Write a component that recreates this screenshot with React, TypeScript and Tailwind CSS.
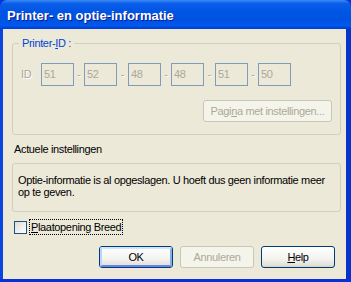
const font = "font-['Tahoma','Liberation_Sans',Arial,sans-serif]"

const ids = ["51", "52", "48", "48", "51", "50"]

function IdBox({ value }: { value: string }) {
    return (
        <div className="flex h-[23px] w-[33px] items-center border border-[#7f9db9] bg-[#ece9d8] pl-[2px] text-[#aca899]">
            {value}
        </div>
    )
}

function XpButton({ children, variant }: { children: React.ReactNode; variant: "default" | "normal" | "disabled" }) {
    if (variant === "disabled") {
        return (
            <div className="flex h-[22px] w-[74px] items-center justify-center rounded-[3px] border border-[#c9c7ba] bg-[#f5f4ea] text-[#aca899]">
                {children}
            </div>
        )
    }
    return (
        <div className="h-[22px] w-[74px] rounded-[3px] border border-[#003c74] bg-[linear-gradient(to_bottom,#ffffff,#f3f3ef_60%,#e3e1d8_90%,#d6d0c5)]">
            <div
                className={
                    variant === "default"
                        ? "flex h-full w-full items-center justify-center rounded-[2px] border-[2px] border-t-[#cee7ff] border-l-[#bcd4f6] border-r-[#89ade4] border-b-[#6982ee] text-black"
                        : "flex h-full w-full items-center justify-center text-black"
                }
            >
                {children}
            </div>
        </div>
    )
}

export default function App() {
    return (
        <div className={`h-[282px] w-[351px] overflow-hidden bg-[#0831d9] text-[11px] leading-[13px] ${font}`}>
            <div className="flex h-[29px] items-center rounded-t-[7px] bg-[linear-gradient(to_bottom,#3d8bf7_0%,#0a5ee8_12%,#0055e5_40%,#0053e1_70%,#0058ee_88%,#003cd0_100%)] pl-[7px] pt-[1px]">
                <span className="font-['Liberation_Sans',Arial,sans-serif] text-[13px] font-bold text-white [text-shadow:1px_1px_#0a1b8c]">
                    Printer- en optie-informatie
                </span>
            </div>
            <div className="flex h-[250px] flex-col border-l-[3px] border-r-[5px] border-l-[#0a45e0] border-r-[#0733c9] bg-[#ece9d8] tracking-[-0.35px]">
                {/* Printer-ID group */}
                <div className="relative ml-[9px] mt-[14px] h-[92px] w-[329px] rounded-[3px] border border-[#d0d0bf]">
                    <span className="absolute left-[6px] top-[-7px] bg-[#ece9d8] px-[3px] text-[#0046d5]">
                        Printer-<span className="underline">I</span>D :
                    </span>
                    <div className="ml-[8px] mt-[19px] flex items-center">
                        <span className="w-[20px] text-[#aca899] [text-shadow:1px_1px_#ffffff]">ID</span>
                        {ids.map((v, i) => (
                            <div key={i} className="flex items-center">
                                <IdBox value={v} />
                                {i < ids.length - 1 && (
                                    <span className={`${i % 2 === 0 ? "w-[10px]" : "w-[11px]"} text-center text-[#aca899] [text-shadow:1px_1px_#ffffff]`}>-</span>
                                )}
                            </div>
                        ))}
                    </div>
                    <div className="mt-[14px] flex justify-end pr-[8px]">
                        <div className="flex h-[22px] w-[129px] items-center justify-center rounded-[3px] border border-[#c9c7ba] bg-[#f5f4ea] text-[#aca899]">
                            Pagi<span className="underline">n</span>a met instellingen...
                        </div>
                    </div>
                </div>

                <div className="ml-[11px] mt-[8px] text-black">Actuele instellingen</div>

                <div className="ml-[9px] mt-[7px] h-[49px] w-[329px] rounded-[3px] border border-[#d0d0bf] pl-[5px] pr-[8px] pt-[10px] leading-[12px] text-black">
                    Optie-informatie is al opgeslagen. U hoeft dus geen informatie meer op te geven.
                </div>

                <div className="ml-[11px] mt-[7px] flex h-[16px] items-center">
                    <div className="h-[13px] w-[13px] border border-[#1c5180] bg-[linear-gradient(135deg,#dcdcd7,#ffffff)]" />
                    <div className="ml-[2px] flex h-[16px] items-center border border-dotted border-black px-[1px] text-black">
                        <span className="underline">P</span>laatopening Breed
                    </div>
                </div>

                <div className="mt-[11px] flex justify-end gap-[7px] pr-[11px]">
                    <XpButton variant="default">OK</XpButton>
                    <XpButton variant="disabled">Annuleren</XpButton>
                    <XpButton variant="normal">
                        <span>
                            <span className="underline">H</span>elp
                        </span>
                    </XpButton>
                </div>
            </div>
        </div>
    )
}
